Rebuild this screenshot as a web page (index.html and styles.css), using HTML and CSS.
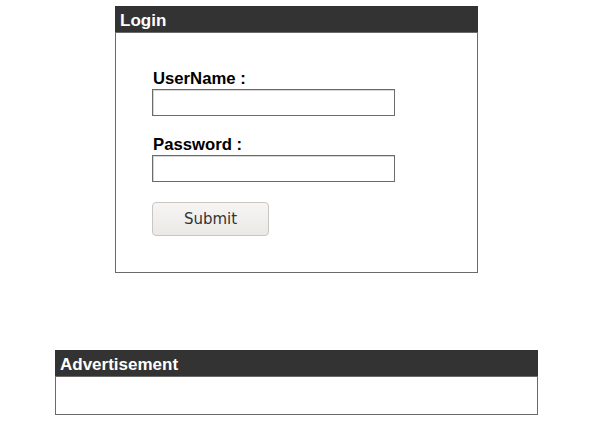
FILE: index.html
```html
<!DOCTYPE html>
<html>
<head>
<meta charset="utf-8">
<link rel="stylesheet" href="styles.css">
</head>
<body>
<div class="panel login">
  <div class="panel-head">Login</div>
  <form class="login-body">
    <label class="field-label" for="u">UserName :</label>
    <input class="field" id="u" type="text">
    <label class="field-label second" for="p">Password :</label>
    <input class="field" id="p" type="password">
    <button class="submit" type="button">Submit</button>
  </form>
</div>
<div class="panel ad">
  <div class="panel-head">Advertisement</div>
  <div class="ad-body"></div>
</div>
</body>
</html>
```
FILE: styles.css
```css
html, body {
  margin: 0;
  padding: 0;
  background: #fff;
}
body {
  padding: 6px 0 0 0;
  font-family: "Liberation Sans", Arial, sans-serif;
}
.panel {
  border: 1px solid #6a6a6a;
  box-sizing: border-box;
  background: #fff;
}
.panel-head {
  background: #333333;
  color: #fff;
  font-weight: bold;
  font-size: 17px;
  line-height: 19px;
  height: 27px;
  box-sizing: border-box;
  padding: 5px 0 0 5px;
  margin: -1px -1px 0 -1px;
  border-bottom: 1px solid #6a6a6a;
}
.login {
  width: 363px;
  margin-left: 115px;
  height: 267px;
}
.login-body {
  display: flex;
  flex-direction: column;
  align-items: flex-start;
  padding: 37px 0 0 36px;
  margin: 0;
}
.field-label {
  font-weight: bold;
  font-size: 16.7px;
  line-height: 18px;
  color: #000;
  padding-left: 1px;
  margin-bottom: 1px;
}
.field-label.second {
  margin-top: 20px;
}
.field {
  width: 243px;
  height: 27px;
  box-sizing: border-box;
  border: 1px solid #6b6b6b;
  box-shadow: inset 1px 1px 0 #d6d6d6;
  background: #fff;
  margin: 0;
  padding: 2px;
  outline: none;
}
.submit {
  margin-top: 20px;
  width: 117px;
  height: 34px;
  box-sizing: border-box;
  border: 1px solid #c9c6c2;
  border-radius: 4px;
  background: linear-gradient(#f6f5f4, #ebe9e6);
  font-family: "DejaVu Sans", sans-serif;
  font-size: 15px;
  color: #333;
  padding: 0;
}
.ad {
  width: 483px;
  margin: 77px 0 0 55px;
}
.ad-body {
  height: 37px;
}
```
